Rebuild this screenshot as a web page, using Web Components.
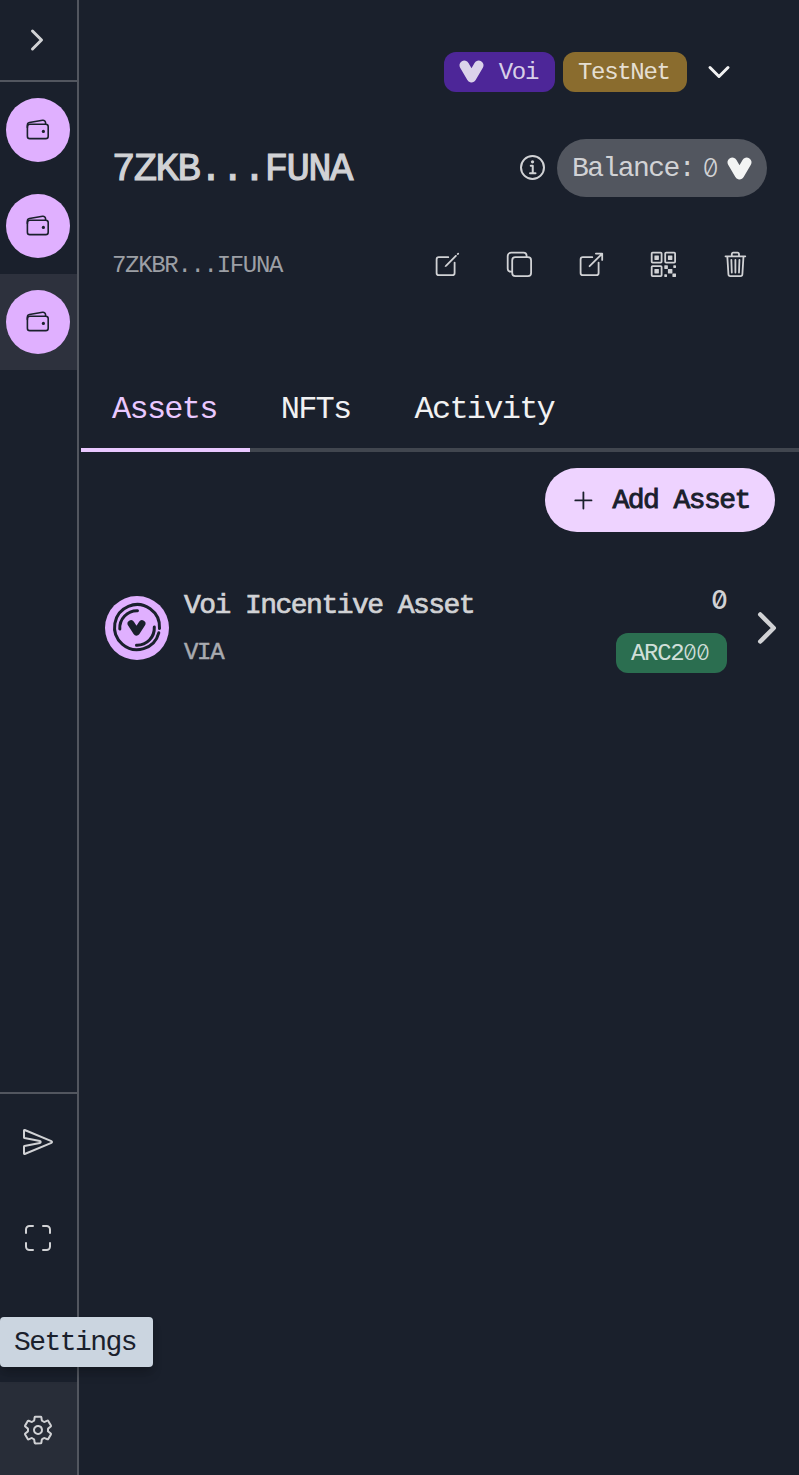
<!DOCTYPE html>
<html lang="en">
<head>
<meta charset="utf-8">
<title>Wallet</title>
<style>
  html, body { margin: 0; height: 100%; background: #1a202c; overflow: hidden; }
  body { font-family: "Liberation Mono", monospace; color: #d1d2d5; }
</style>
</head>
<body>
<wallet-app></wallet-app>
<script>
/* Tracking is relative to each element's own font size, so it is set in every root. */
const BASE = '<style>:host, span, h1 { letter-spacing: -.0549em; }</style>';

const define = (name, markup, setup) => {
  const template = document.createElement('template');
  template.innerHTML = BASE + markup;
  customElements.define(name, class extends HTMLElement {
    constructor() {
      super();
      this.attachShadow({ mode: 'open' }).appendChild(template.content.cloneNode(true));
    }
    connectedCallback() { if (setup) setup(this, this.shadowRoot); }
  });
};

const ICONS = {
  forward: '<path stroke-width="48" d="M184 112l144 144-144 144"/>',
  down: '<path stroke-width="48" d="M112 184l144 144 144-144"/>',
  add: '<path d="M256 112v288M400 256H112"/>',
  wallet: '<rect x="48" y="144" width="416" height="288" rx="48"/><path d="M411.36 144v-30A50 50 0 00352 64.9L88.64 109.85A50 50 0 0048 159v49"/><circle class="f" cx="368" cy="288" r="32"/>',
  info: '<path d="M248 64C146.39 64 64 146.39 64 248s82.39 184 184 184 184-82.39 184-184S349.61 64 248 64z"/><path d="M220 220h32v116M208 340h88"/><circle class="f" cx="248" cy="156" r="26"/>',
  create: '<path d="M384 224v184a40 40 0 01-40 40H104a40 40 0 01-40-40V168a40 40 0 0140-40h167.48"/><path class="f" d="M459.94 53.25a16.06 16.06 0 00-23.22-.56L424.35 65a8 8 0 000 11.31l11.34 11.32a8 8 0 0011.34 0l12.06-12c6.1-6.09 6.67-16.01.85-22.38zM399.34 90L218.82 270.2a9 9 0 00-2.31 3.93L208.16 299a3.91 3.91 0 004.86 4.86l24.85-8.35a9 9 0 003.93-2.31L422 112.66a9 9 0 000-12.66l-9.95-10a9 9 0 00-12.71 0z"/>',
  copy: '<rect x="128" y="128" width="336" height="336" rx="57"/><path d="M383.5 128l.5-24a56.16 56.16 0 00-56-56H112a64.19 64.19 0 00-64 64v216a56.16 56.16 0 0056 56h24"/>',
  open: '<path d="M384 224v184a40 40 0 01-40 40H104a40 40 0 01-40-40V168a40 40 0 0140-40h167.48M336 64h112v112M224 288L440 72"/>',
  qr: '<g class="f"><rect x="336" y="336" width="80" height="80" rx="8"/><rect x="272" y="272" width="64" height="64" rx="8"/><rect x="416" y="416" width="64" height="64" rx="8"/><rect x="432" y="272" width="48" height="48" rx="8"/><rect x="272" y="432" width="48" height="48" rx="8"/><rect x="336" y="96" width="80" height="80" rx="8"/><rect x="96" y="96" width="80" height="80" rx="8"/><rect x="96" y="336" width="80" height="80" rx="8"/></g><rect x="288" y="48" width="176" height="176" rx="16"/><rect x="48" y="48" width="176" height="176" rx="16"/><rect x="48" y="288" width="176" height="176" rx="16"/>',
  trash: '<path d="M112 112l20 320c.95 18.49 14.4 32 32 32h184c18 0 30.87-13.51 32-32l20-320M80 112h352M192 112V72a23.93 23.93 0 0124-24h80a23.93 23.93 0 0124 24v40M256 176v224M184 176l8 224M328 176l-8 224"/>',
  send: '<path d="M470.3 271.15L43.16 447.31a7.83 7.83 0 01-11.16-7V327a8 8 0 016.51-7.86l247.62-47c17.36-3.29 17.36-28.15 0-31.44l-247.63-47a8 8 0 01-6.5-7.85V72.59c0-5.74 5.88-10.26 11.16-8L470.3 241.76a16 16 0 010 29.39z"/>',
  scan: '<path d="M336 448h56a56 56 0 0056-56v-56M448 176v-56a56 56 0 00-56-56h-56M176 448h-56a56 56 0 01-56-56v-56M64 176v-56a56 56 0 0156-56h56"/>',
  settings: '<path d="M262.29 192.31a64 64 0 1057.4 57.4 64.13 64.13 0 00-57.4-57.4zM416.39 256a154.34 154.34 0 01-1.53 20.79l45.21 35.46a10.81 10.81 0 012.45 13.75l-42.77 74a10.81 10.81 0 01-13.14 4.59l-44.9-18.08a16.11 16.11 0 00-15.17 1.75A164.48 164.48 0 01325 400.8a15.94 15.94 0 00-8.82 12.14l-6.73 47.89a11.08 11.08 0 01-10.68 9.17h-85.54a11.11 11.11 0 01-10.69-8.87l-6.72-47.82a16.07 16.07 0 00-9-12.22 155.3 155.3 0 01-21.46-12.57 16 16 0 00-15.11-1.71l-44.89 18.07a10.81 10.81 0 01-13.14-4.58l-42.77-74a10.8 10.8 0 012.45-13.75l38.21-30a16.05 16.05 0 006-14.08c-.36-4.17-.58-8.33-.58-12.5s.21-8.27.58-12.35a16 16 0 00-6.07-13.94l-38.19-30A10.81 10.81 0 0149.48 186l42.77-74a10.81 10.81 0 0113.14-4.59l44.9 18.08a16.11 16.11 0 0015.17-1.75A164.48 164.48 0 01187 111.2a15.94 15.94 0 008.82-12.14l6.73-47.89A11.08 11.08 0 01213.23 42h85.54a11.11 11.11 0 0110.69 8.87l6.72 47.82a16.07 16.07 0 009 12.22 155.3 155.3 0 0121.46 12.57 16 16 0 0015.11 1.71l44.89-18.07a10.81 10.81 0 0113.14 4.58l42.77 74a10.8 10.8 0 01-2.45 13.75l-38.21 30a16.05 16.05 0 00-6.05 14.08c.33 4.14.55 8.3.55 12.47z"/>'
};

define('line-icon', `
  <style>
    :host { display: block; flex: none; }
    svg { display: block; fill: none; stroke: currentColor; stroke-width: 32; stroke-linecap: round; stroke-linejoin: round; }
    .f { fill: currentColor; stroke: none; }
  </style>
  <svg viewBox="0 0 512 512"></svg>`, (host, root) => {
  const svg = root.querySelector('svg');
  const size = host.getAttribute('size') || 32;
  svg.setAttribute('width', size);
  svg.setAttribute('height', size);
  svg.innerHTML = ICONS[host.getAttribute('name')];
});

define('voi-mark', `
  <style>
    :host { display: block; flex: none; width: 25px; height: 23px; }
    svg { display: block; }
  </style>
  <svg width="25" height="23" viewBox="0 0 25 23" fill="none" stroke="currentColor" stroke-width="9.6" stroke-linecap="round" stroke-linejoin="round">
    <path d="M5.3 5.3L12.5 17.6 19.7 5.3"/>
  </svg>`);

/* Slashed zero, set on the same advance as the surrounding monospace text. */
define('slashed-zero', `
  <style>
    :host { display: inline-block; width: .545em; text-align: center; }
    span { letter-spacing: 0; font-family: Inter, sans-serif; font-size: .91em; font-feature-settings: "zero"; line-height: 1; margin: 0 -.1em; }
  </style><span><slot></slot></span>`);

define('wallet-avatar', `
  <style>
    :host { display: flex; width: 64px; height: 64px; border-radius: 50%; background: #e0b0ff; color: #1a202c; align-items: center; justify-content: center; }
  </style>
  <line-icon name="wallet" size="25.6"></line-icon>`);

define('nav-item', `
  <style>
    :host { display: flex; height: 96px; flex: none; align-items: center; padding-left: 6px; box-sizing: border-box; }
    :host([selected]) { background: #2d313d; }
    :host([icon]) { padding-left: 22px; }
    :host([hovered]) { background: #282d38; }
  </style><slot></slot>`);

define('side-bar', `
  <style>
    :host { display: flex; flex-direction: column; width: 77px; border-right: 2px solid #52565f; flex: none; overflow: hidden; }
    header { height: 80px; flex: none; display: flex; align-items: center; padding-left: 21px; border-bottom: 2px solid #52565f; }
    nav { flex: 1; }
    footer { height: 381px; flex: none; border-top: 2px solid #52565f; }
  </style>
  <header><line-icon name="forward"></line-icon></header>
  <nav>
    <nav-item><wallet-avatar></wallet-avatar></nav-item>
    <nav-item><wallet-avatar></wallet-avatar></nav-item>
    <nav-item selected><wallet-avatar></wallet-avatar></nav-item>
  </nav>
  <footer>
    <nav-item icon><line-icon name="send"></line-icon></nav-item>
    <nav-item icon><line-icon name="scan"></line-icon></nav-item>
    <nav-item icon></nav-item>
    <nav-item icon hovered><line-icon name="settings"></line-icon></nav-item>
  </footer>`);

define('chip-badge', `
  <style>
    :host { display: flex; box-sizing: border-box; height: 40px; padding: 2px 15px 0; border-radius: 12px; align-items: center; justify-content: space-between; font-size: 24px; line-height: 28px; color: rgba(255,255,255,.8); background: var(--tone); white-space: nowrap; }
    ::slotted(voi-mark) { margin-top: -3px; }
  </style><slot></slot>`);

define('network-row', `
  <style>
    :host { display: flex; justify-content: flex-end; align-items: center; gap: 8px; height: 40px; padding: 52px 64px 0 0; }
    .voi { --tone: #4d2698; width: 111px; }
    .voi span { margin-right: 2px; }
    .test { --tone: #8a6c2e; width: 124px; }
    line-icon { margin-left: 8px; color: #f1f1f2; }
  </style>
  <chip-badge class="voi"><voi-mark></voi-mark><span>Voi</span></chip-badge>
  <chip-badge class="test"><span>TestNet</span></chip-badge>
  <line-icon name="down"></line-icon>`);

define('account-head', `
  <style>
    :host { display: block; padding: 47px 32px 0 33px; }
    .row { display: flex; align-items: center; }
    h1 { margin: 4px auto 0 0; font-size: 39px; line-height: 44px; letter-spacing: -.041em; font-weight: normal; -webkit-text-stroke: 1.1px currentColor; }
    .top { height: 58px; }
    .top line-icon { margin-right: -1px; }
    .pill { display: flex; align-items: center; box-sizing: border-box; width: 210px; height: 58px; padding: 0 15px; margin-left: 9px; border-radius: 29px; background: #52565f; font-size: 28px; }
    .pill span { margin-top: 1px; }
    .pill slashed-zero { margin: 2px 9px 0 9px; font-weight: 300; }
    .pill voi-mark { color: #f3f4f4; }
    .bottom { height: 32px; margin-top: 51px; font-size: 24px; color: #9c9fa5; }
    .bottom span { margin: 2px auto 0 0; }
    .tools { display: flex; gap: 43.2px; margin-right: 17.6px; color: #d1d2d5; }
  </style>
  <div class="row top">
    <h1>7ZKB...FUNA</h1>
    <line-icon name="info"></line-icon>
    <div class="pill"><span>Balance:</span><slashed-zero>0</slashed-zero><voi-mark></voi-mark></div>
  </div>
  <div class="row bottom">
    <span>7ZKBR...IFUNA</span>
    <div class="tools">
      <line-icon name="create" size="28.8"></line-icon>
      <line-icon name="copy" size="28.8"></line-icon>
      <line-icon name="open" size="28.8"></line-icon>
      <line-icon name="qr" size="28.8"></line-icon>
      <line-icon name="trash" size="28.8"></line-icon>
    </div>
  </div>`);

define('tab-item', `
  <style>
    :host { display: block; padding: 8px 33px 0 31px; height: 74px; line-height: 48px; font-size: 32px; color: #f1f1f2; border-bottom: 4px solid transparent; margin-bottom: -4px; box-sizing: border-box; }
    :host([active]) { color: #e9c8ff; border-color: #e9c8ff; }
  </style><slot></slot>`);

define('tab-list', `
  <style>
    :host { display: flex; margin: 98px 0 0 2px; height: 70px; border-bottom: 4px solid #41464f; }
  </style>
  <tab-item active>Assets</tab-item><tab-item>NFTs</tab-item><tab-item>Activity</tab-item>`);

define('pill-button', `
  <style>
    :host { display: flex; box-sizing: border-box; width: 230px; height: 64px; margin: 16px 24px 0 auto; padding: 0 24px; border-radius: 32px; background: #eed3ff; color: #1a202c; font-size: 28px; align-items: center; gap: 14.6px; white-space: nowrap; }
    span { margin-top: 1px; -webkit-text-stroke: .9px currentColor; }
  </style>
  <line-icon name="add" size="28.8"></line-icon><span><slot></slot></span>`);

define('asset-row', `
  <style>
    :host { display: flex; align-items: center; height: 96px; margin: 48px 0 0; padding: 0 8px 0 26px; }
    .coin { display: block; flex: none; }
    .names, .amount { display: flex; flex-direction: column; }
    .names { margin: 3px auto 0 15px; gap: 15px; }
    .name { font-size: 28px; line-height: 32px; -webkit-text-stroke: .7px currentColor; }
    .unit { font-size: 24px; line-height: 32px; color: #a9abb0; -webkit-text-stroke: .5px currentColor; }
    .amount { align-items: flex-end; margin-right: 16px; gap: 14px; padding-bottom: 6px; }
    .total { font-size: 28px; line-height: 34px; font-weight: 500; height: 34px; padding-top: 8px; }
    chip-badge { --tone: #2b6e50; width: 111px; }
    chip-badge slashed-zero { font-weight: 300; }
  </style>
  <svg class="coin" width="64" height="64" viewBox="0 0 64 64" fill="none" stroke="#1a202c" stroke-width="3" stroke-linecap="round">
    <circle cx="32" cy="32" r="32" fill="#e0b0ff" stroke="none"/>
    <path d="M54.5 32.5A22.5 22.5 0 1 0 53.8 36.8"/>
    <path d="M14.8 33A17.3 17.3 0 0 1 32.5 14.7M49.3 31A17.3 17.3 0 0 1 31.5 49.3"/>
    <path d="M26 27.6L31.5 36.2 37 27.6" stroke-width="6.9" stroke-linejoin="round"/>
  </svg>
  <div class="names"><span class="name">Voi Incentive Asset</span><span class="unit">VIA</span></div>
  <div class="amount"><slashed-zero class="total">0</slashed-zero><chip-badge><span>ARC2<slashed-zero>0</slashed-zero><slashed-zero>0</slashed-zero></span></chip-badge></div>
  <line-icon name="forward" size="48"></line-icon>`);

define('hover-tip', `
  <style>
    :host { position: absolute; left: 0; top: 1317px; box-sizing: border-box; width: 153px; height: 50px; padding: 2px 14px 0; border-radius: 4px; background: #cbd5e0; color: #1a202c; font-size: 28px; line-height: 48px; white-space: nowrap; box-shadow: 0 8px 12px -2px rgba(0,0,0,.2), 0 4px 8px -2px rgba(0,0,0,.12); }
  </style><slot></slot>`);

define('wallet-app', `
  <style>
    :host { display: flex; width: 100%; height: 100vh; position: relative; overflow: hidden; }
    main { flex: 1; min-width: 0; display: flex; flex-direction: column; }
  </style>
  <side-bar></side-bar>
  <main>
    <network-row></network-row>
    <account-head></account-head>
    <tab-list></tab-list>
    <pill-button>Add Asset</pill-button>
    <asset-row></asset-row>
  </main>
  <hover-tip>Settings</hover-tip>`);
</script>
</body>
</html>
